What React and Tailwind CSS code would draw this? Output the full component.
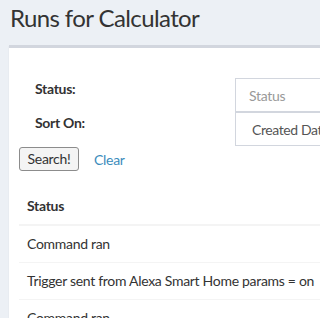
export default function App() {
  const rows = ["Command ran", "Trigger sent from Alexa Smart Home params = on", "Command ran", "Command ran"];
  return (
    <div className="w-[320px] h-[318px] overflow-hidden bg-[#ecf0f5] font-['Lato',sans-serif] text-[14px] tracking-[-0.3px] text-[#333]">
      <div className="pl-[10px] pt-[5px] h-[45px]">
        <h1 className="text-[24px] leading-[26px] tracking-[-0.6px] text-[#333] m-0">Runs for Calculator</h1>
      </div>
      <div className="ml-[9px] w-[420px] bg-white border-t-[3px] border-[#d2d6de] shadow-[0_1px_1px_rgba(0,0,0,0.1)] pb-[20px]">
        <div className="grid grid-cols-[226px_1fr] pt-[30px]">
          <div className="h-[34px] pl-[26px] pt-[1px] font-bold leading-[20px]">Status:</div>
          <div className="h-[34px] border border-[#d2d6de] pl-[13px] flex items-center text-[#999]">Status</div>
          <div className="h-[34px] pl-[26px] pt-[1px] font-bold leading-[20px]">Sort On:</div>
          <div className="h-[34px] border border-[#d2d6de] pl-[16px] flex items-center text-[#555] tracking-[-0.4px]">Created Date</div>
        </div>
        <div className="flex items-center pl-[10px] mt-[1px]">
          <button className="h-[24px] w-[60px] border border-[#8c8c8c] rounded-[3px] bg-[#f4f4f4] text-[14px] text-[#333] leading-[20px]">Search!</button>
          <a className="ml-[15px] text-[#3c8dbc]">Clear</a>
        </div>
        <table className="ml-[10px] mt-[17px] w-[400px] border-collapse">
          <thead>
            <tr>
              <th className="text-left font-bold px-[8px] py-[8px] leading-[20px] border-b-2 border-[#f4f4f4]">Status</th>
            </tr>
          </thead>
          <tbody>
            {rows.map((r, i) => (
              <tr key={i}>
                <td className="px-[8px] py-[8px] leading-[20px] border-t border-[#f4f4f4]">{r}</td>
              </tr>
            ))}
          </tbody>
        </table>
      </div>
    </div>
  );
}
